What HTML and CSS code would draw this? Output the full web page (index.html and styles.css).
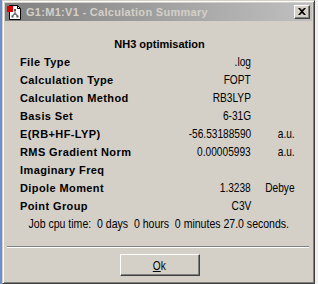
FILE: index.html
```html
<!DOCTYPE html>
<html>
<head>
<meta charset="utf-8">
<link rel="stylesheet" href="styles.css">
</head>
<body>
<div class="edge"></div>
<div class="window">
  <div class="titlebar">
    <svg class="appicon" width="16" height="16" viewBox="0 0 16 16">
      <path d="M2.5 1.5 H10.5 L13.5 4.5 V15.5 H2.5 Z" fill="#fff" stroke="#000"/>
      <path d="M10.5 1.5 V4.5 H13.5" fill="none" stroke="#000"/>
      <rect x="0" y="2" width="6" height="6" fill="#e00000"/>
      <path d="M8 6 V9 M8 9 L5.5 12 M8 9 L10.5 12" stroke="#777" stroke-width="1.2" fill="none"/>
      <rect x="7" y="5" width="2" height="2" fill="#555"/>
      <rect x="4.5" y="11.5" width="2" height="2" fill="#555"/>
      <rect x="9.5" y="11.5" width="2" height="2" fill="#555"/>
    </svg>
    <span class="title">G1:M1:V1 - Calculation Summary</span>
    <div class="closebtn">
      <svg width="8" height="7" viewBox="0 0 8 7"><path d="M0 0h2l2 2 2-2h2L5 3.5 8 7H6L4 5 2 7H0l3-3.5z" fill="#000"/></svg>
    </div>
  </div>
  <div class="content">
    <div class="heading">NH3 optimisation</div>
    <div class="row"><span class="label">File Type</span><span class="value"><span class="nar">.log</span></span><span class="unit"></span></div>
    <div class="row"><span class="label">Calculation Type</span><span class="value"><span class="nar">FOPT</span></span><span class="unit"></span></div>
    <div class="row"><span class="label">Calculation Method</span><span class="value"><span class="nar">RB3LYP</span></span><span class="unit"></span></div>
    <div class="row"><span class="label">Basis Set</span><span class="value"><span class="nar">6-31G</span></span><span class="unit"></span></div>
    <div class="row"><span class="label">E(RB+HF-LYP)</span><span class="value"><span class="nar">-56.53188590</span></span><span class="unit"><span class="nar">a.u.</span></span></div>
    <div class="row"><span class="label">RMS Gradient Norm</span><span class="value"><span class="nar">0.00005993</span></span><span class="unit"><span class="nar">a.u.</span></span></div>
    <div class="row"><span class="label">Imaginary Freq</span><span class="value"></span><span class="unit"></span></div>
    <div class="row"><span class="label">Dipole Moment</span><span class="value"><span class="nar">1.3238</span></span><span class="unit"><span class="nar">Debye</span></span></div>
    <div class="row"><span class="label">Point Group</span><span class="value"><span class="nar">C3V</span></span><span class="unit"></span></div>
    <div class="jobrow"><span class="nar job">Job cpu time:&nbsp; 0 days&nbsp; 0 hours&nbsp; 0 minutes 27.0 seconds.</span></div>
    <div class="separator"></div>
    <div class="buttons">
      <div class="okbtn"><span class="nar center"><u>O</u>k</span></div>
    </div>
  </div>
</div>
</body>
</html>
```
FILE: styles.css
```css
html, body {
  margin: 0;
  padding: 0;
}
body {
  width: 318px;
  height: 284px;
  display: flex;
  background: #f0f0f0;
  overflow: hidden;
  font-family: "Liberation Sans", Arial, sans-serif;
}
.edge {
  width: 2px;
  background: #6d8fcf;
  flex: none;
}
.window {
  box-sizing: border-box;
  width: 313px;
  height: 284px;
  flex: none;
  background: #d4d0c8;
  border-top: 1px solid #d4d0c8;
  border-left: 1px solid #d4d0c8;
  border-right: 1px solid #404040;
  border-bottom: 1px solid #404040;
  box-shadow: inset 1px 1px #ffffff, inset -1px -1px #808080;
  padding: 2px;
  display: flex;
  flex-direction: column;
}
.titlebar {
  height: 18px;
  flex: none;
  background: linear-gradient(to right, #808080, #c0c0c0);
  display: flex;
  align-items: center;
  padding-left: 2px;
  padding-right: 2px;
}
.appicon {
  flex: none;
  margin-right: 3px;
}
.title {
  color: #d4d0c8;
  font-weight: bold;
  font-size: 11px;
  letter-spacing: 0.3px;
  flex: 1;
  white-space: nowrap;
}
.closebtn {
  width: 16px;
  height: 14px;
  box-sizing: border-box;
  background: #d4d0c8;
  border-top: 1px solid #ffffff;
  border-left: 1px solid #ffffff;
  border-right: 1px solid #404040;
  border-bottom: 1px solid #404040;
  box-shadow: inset -1px -1px #808080;
  display: flex;
  align-items: center;
  justify-content: center;
  padding-right: 1px;
  padding-bottom: 1px;
}
.content {
  flex: 1;
  display: flex;
  flex-direction: column;
  padding-top: 15px;
  color: #000;
}
.heading {
  text-align: center;
  font-weight: bold;
  font-size: 11px;
  line-height: 17px;
  height: 17px;
  padding-left: 2px;
}
.row {
  display: grid;
  grid-template-columns: 130px 101px 44px;
  height: 18px;
  line-height: 18px;
  padding-left: 15px;
}
.label {
  font-weight: bold;
  font-size: 11px;
  letter-spacing: 0.4px;
  white-space: nowrap;
}
.value, .unit {
  text-align: right;
  white-space: nowrap;
  font-size: 13px;
}
.nar {
  display: inline-block;
  transform: scaleX(0.78);
  transform-origin: right center;
  white-space: nowrap;
}
.nar.center {
  transform-origin: center center;
}
.nar.job {
  transform: scaleX(0.81);
  transform-origin: center center;
  flex: none;
}
.jobrow {
  height: 18px;
  line-height: 18px;
  font-size: 13px;
  display: flex;
  justify-content: center;
  white-space: nowrap;
  padding-left: 1px;
}
.separator {
  height: 0;
  margin: 13px 3px 0 2px;
  border-top: 1px solid #808080;
  border-bottom: 1px solid #ffffff;
}
.buttons {
  display: flex;
  justify-content: center;
  margin-top: 6px;
  padding-left: 2px;
}
.okbtn {
  box-sizing: border-box;
  width: 80px;
  height: 22px;
  border-top: 1px solid #ffffff;
  border-left: 1px solid #ffffff;
  border-right: 1px solid #404040;
  border-bottom: 1px solid #404040;
  box-shadow: inset -1px -1px #808080;
  display: flex;
  align-items: center;
  justify-content: center;
  font-size: 13px;
}
```
